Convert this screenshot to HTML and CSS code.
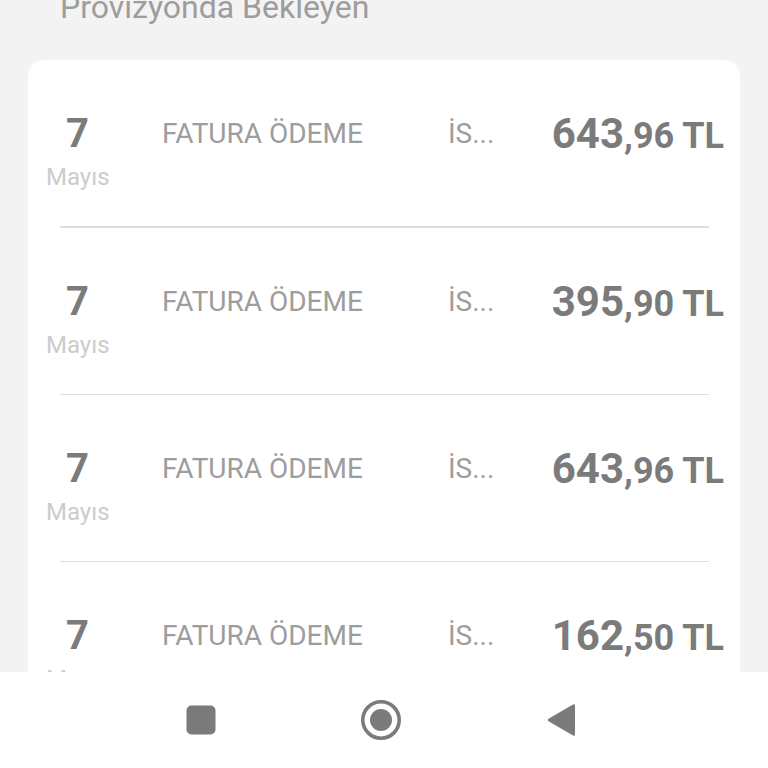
FILE: index.html
```html
<!DOCTYPE html>
<html lang="tr">
<head>
    <meta charset="UTF-8">
    <title>Provizyonda Bekleyen</title>
    <link rel="stylesheet" href="styles.css">
</head>
<body>
    <div class="screen">
        <h2 class="title">Provizyonda Bekleyen</h2>

        <div class="card">
            <div class="row">
                <div class="date">
                    <div class="day">7</div>
                    <div class="month">Mayıs</div>
                </div>
                <div class="desc">FATURA ÖDEME</div>
                <div class="place">İS...</div>
                <div class="amount"><span class="big">643</span>,96 TL</div>
            </div>
            <div class="row">
                <div class="date">
                    <div class="day">7</div>
                    <div class="month">Mayıs</div>
                </div>
                <div class="desc">FATURA ÖDEME</div>
                <div class="place">İS...</div>
                <div class="amount"><span class="big">395</span>,90 TL</div>
            </div>
            <div class="row">
                <div class="date">
                    <div class="day">7</div>
                    <div class="month">Mayıs</div>
                </div>
                <div class="desc">FATURA ÖDEME</div>
                <div class="place">İS...</div>
                <div class="amount"><span class="big">643</span>,96 TL</div>
            </div>
            <div class="row">
                <div class="date">
                    <div class="day">7</div>
                    <div class="month">Mayıs</div>
                </div>
                <div class="desc">FATURA ÖDEME</div>
                <div class="place">İS...</div>
                <div class="amount"><span class="big">162</span>,50 TL</div>
            </div>
        </div>
    </div>

    <!-- Android gezinme çubuğu -->
    <div class="navbar">
        <div class="nav-item">
            <svg width="30" height="30" viewBox="0 0 30 30"><rect x="0.5" y="0.5" width="29" height="29" rx="5" fill="#7b7b7b"/></svg>
        </div>
        <div class="nav-item">
            <svg width="42" height="42" viewBox="0 0 42 42"><circle cx="21" cy="21" r="18.2" fill="none" stroke="#7b7b7b" stroke-width="3.6"/><circle cx="21" cy="21" r="11" fill="#7b7b7b"/></svg>
        </div>
        <div class="nav-item">
            <svg width="30" height="36" viewBox="0 0 30 36"><path d="M27 2.5 Q29 1.5 29 4 L29 32 Q29 34.5 27 33.5 L2.5 19.2 Q1 18 2.5 16.8 Z" fill="#7b7b7b"/></svg>
        </div>
    </div>
</body>
</html>
```

FILE: styles.css
```css
html, body {
    margin: 0;
    height: 100%;
}
body {
    font-family: Roboto, 'Noto Sans', sans-serif;
    background: #f3f3f3;
    display: flex;
    flex-direction: column;
    height: 768px;
    overflow: hidden;
}
.screen {
    height: 672px;
    overflow: hidden;
}
.title {
    margin: -9px 0 0 60px;
    font-size: 32px;
    line-height: 32px;
    font-weight: 400;
    color: #9d9d9d;
}
.card {
    background: #fff;
    margin: 37px 28px 0 28px;
    border-radius: 16px;
    padding: 0 16px 0 18px;
}
.row {
    display: flex;
    align-items: flex-start;
    height: 166px;
    box-sizing: border-box;
    padding-top: 54px;
    position: relative;
}
.row + .row {
    height: 167px;
    border-top: 1px solid #dedede;
    margin: 0 15px 0 14px;
    padding-left: 0;
}
.row + .row .date {
    margin-left: -14px;
}
.row + .row .amount {
    margin-right: -15px;
}
.row:first-child::after {
    content: '';
    position: absolute;
    left: 14px;
    right: 15px;
    bottom: 0;
    border-bottom: 1px solid #dedede;
}
.row:first-child {
    height: 167px;
}
.date {
    width: 63px;
    text-align: center;
}
.day {
    font-size: 40px;
    line-height: 40px;
    font-weight: 700;
    color: #7b7b7b;
}
.month {
    margin-top: 11px;
    font-size: 24px;
    line-height: 24px;
    color: #cccccc;
}
.desc {
    margin-left: 53px;
    width: 286px;
    font-size: 28px;
    line-height: 40px;
    color: #9d9d9d;
}
.place {
    font-size: 28px;
    line-height: 40px;
    color: #9d9d9d;
}
.amount {
    margin-left: auto;
    font-size: 36px;
    line-height: 40px;
    font-weight: 700;
    color: #7b7b7b;
    white-space: nowrap;
}
.amount .big {
    font-size: 42px;
}
.navbar {
    height: 96px;
    background: #fff;
    display: flex;
    align-items: center;
    padding-left: 111px;
}
.nav-item {
    width: 180px;
    display: flex;
    justify-content: center;
    align-items: center;
}
```
